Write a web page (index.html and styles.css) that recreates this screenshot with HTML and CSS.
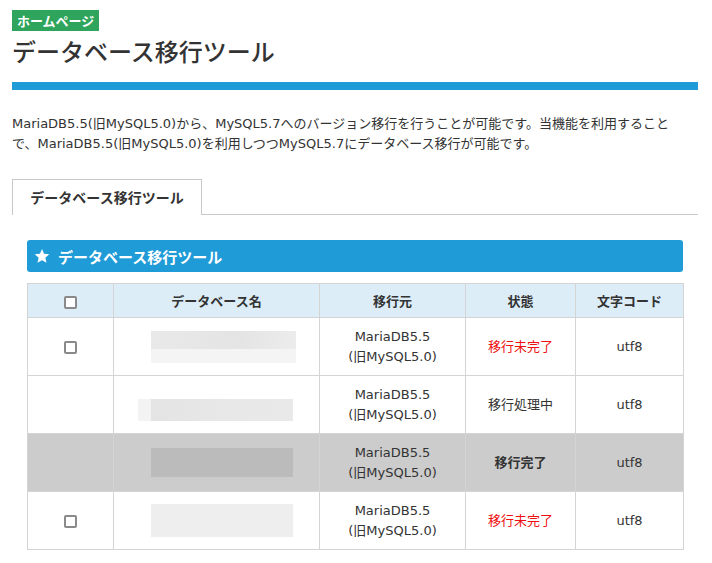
FILE: index.html
```html
<!DOCTYPE html>
<html lang="ja">
<head>
<meta charset="utf-8">
<link rel="stylesheet" href="styles.css">
</head>
<body>
<div class="page">
  <div class="badge">ホームページ</div>
  <h1 class="title">データベース移行ツール</h1>
  <div class="bar"></div>
  <p class="desc">MariaDB5.5(旧MySQL5.0)から、MySQL5.7へのバージョン移行を行うことが可能です。当機能を利用すること<br>で、MariaDB5.5(旧MySQL5.0)を利用しつつMySQL5.7にデータベース移行が可能です。</p>
  <div class="tabs"><div class="tab">データベース移行ツール</div></div>
  <div class="section">
    <div class="sec-head">
      <svg class="star" viewBox="0 0 24 24" width="16" height="16"><path d="M12 1.5l3.1 7.2 7.8.7-5.9 5.2 1.8 7.7L12 18.3l-6.8 4 1.8-7.7L1.1 9.4l7.8-.7z" fill="#fff"/></svg>
      <span>データベース移行ツール</span>
    </div>
    <table class="tbl">
      <colgroup>
        <col class="c1"><col class="c2"><col class="c3"><col class="c4"><col class="c5">
      </colgroup>
      <thead>
        <tr><th><span class="cb"></span></th><th>データベース名</th><th>移行元</th><th>状態</th><th>文字コード</th></tr>
      </thead>
      <tbody>
        <tr>
          <td><span class="cb"></span></td>
          <td><div class="blur b1"><div class="b1t"></div><div class="b1b"></div></div></td>
          <td>MariaDB5.5<br>(旧MySQL5.0)</td>
          <td class="red">移行未完了</td>
          <td>utf8</td>
        </tr>
        <tr>
          <td></td>
          <td><div class="blur b2"><div class="b2l"></div><div class="b2m"></div></div></td>
          <td>MariaDB5.5<br>(旧MySQL5.0)</td>
          <td>移行処理中</td>
          <td>utf8</td>
        </tr>
        <tr class="done">
          <td></td>
          <td><div class="blur b3"></div></td>
          <td>MariaDB5.5<br>(旧MySQL5.0)</td>
          <td class="bold">移行完了</td>
          <td>utf8</td>
        </tr>
        <tr>
          <td><span class="cb"></span></td>
          <td><div class="blur b4"></div></td>
          <td>MariaDB5.5<br>(旧MySQL5.0)</td>
          <td class="red">移行未完了</td>
          <td>utf8</td>
        </tr>
      </tbody>
    </table>
  </div>
</div>
</body>
</html>
```
FILE: styles.css
```css
* { box-sizing: border-box; }
html, body { margin: 0; padding: 0; background: #fff; }
body {
  font-family: "DejaVu Sans", "Noto Sans CJK JP", sans-serif;
  color: #333;
}
.page { padding: 10px 14px 0 12px; }
.badge {
  display: inline-block;
  background: #2ea45c;
  color: #fff;
  font-weight: bold;
  font-size: 13px;
  line-height: 21px;
  height: 21px;
  padding: 0 5px;
  font-family: "Noto Sans CJK JP", sans-serif;
}
.title {
  margin: 3px 0 0;
  font-size: 24px;
  line-height: 34px;
  font-weight: 500;
  font-family: "Noto Sans CJK JP", sans-serif;
  color: #333;
}
.bar { height: 8px; background: #1f9bd7; margin-top: 14px; }
.desc {
  margin: 24px 0 0;
  font-size: 13px;
  line-height: 20px;
  color: #333;
}
.tabs {
  margin-top: 25px;
  border-bottom: 1px solid #c8c8c8;
  display: flex;
}
.tab {
  width: 190px;
  height: 36px;
  border: 1px solid #c8c8c8;
  border-bottom: none;
  background: #fff;
  margin-bottom: -1px;
  font-size: 14px;
  font-weight: bold;
  line-height: 35px;
  text-align: center;
  font-family: "Noto Sans CJK JP", sans-serif;
}
.section { padding: 25px 15px 0 15px; }
.sec-head {
  background: #1f9bd7;
  border-radius: 3px;
  height: 32px;
  display: flex;
  align-items: center;
  padding-left: 7px;
  color: #fff;
  font-size: 15px;
  font-weight: bold;
  font-family: "Noto Sans CJK JP", sans-serif;
}
.star { margin-right: 8px; }
.tbl {
  margin-top: 11px;
  width: 100%;
  border-collapse: collapse;
  table-layout: fixed;
  font-size: 13px;
}
.c1 { width: 86px; }
.c2 { width: 206px; }
.c3 { width: 146px; }
.c4 { width: 110px; }
.c5 { width: 108px; }
.tbl th, .tbl td {
  border: 1px solid #d4d4d4;
  text-align: center;
  vertical-align: middle;
  padding: 0;
}
.tbl th {
  background: #dcedf8;
  height: 34px;
  font-weight: bold;
  font-size: 13px;
  font-family: "Noto Sans CJK JP", sans-serif;
}
.tbl td { height: 58px; line-height: 20px; }
.tbl tr.done td { background: #cccccc; }
.red { color: #ee1111; }
.bold { font-weight: bold; }
.cb {
  display: inline-block;
  width: 13px;
  height: 13px;
  border: 2px solid #8a8a8a;
  border-radius: 2px;
  background: #fff;
  vertical-align: middle;
}
.blur { margin: 0 auto; display: block; }
.b1 { width: 145px; height: 32px; margin-left: 37px; }
.b1t { height: 18px; background: linear-gradient(90deg, #e9e9e9, #e4e4e4 60%, #ececec); }
.b1b { height: 14px; background: #f4f4f4; }
.b2 { width: 155px; height: 22px; margin-left: 24px; display: flex; margin-top: 10px; }
.b2l { width: 13px; background: #f3f3f3; }
.b2m { flex: 1; background: linear-gradient(90deg, #e4e4e4, #e8e8e8 60%, #e9e9e9); }
.b3 { width: 142px; height: 29px; margin-left: 37px; background: #bbbbbb; }
.b4 { width: 142px; height: 33px; margin-left: 37px; background: #eeeeee; }
```
